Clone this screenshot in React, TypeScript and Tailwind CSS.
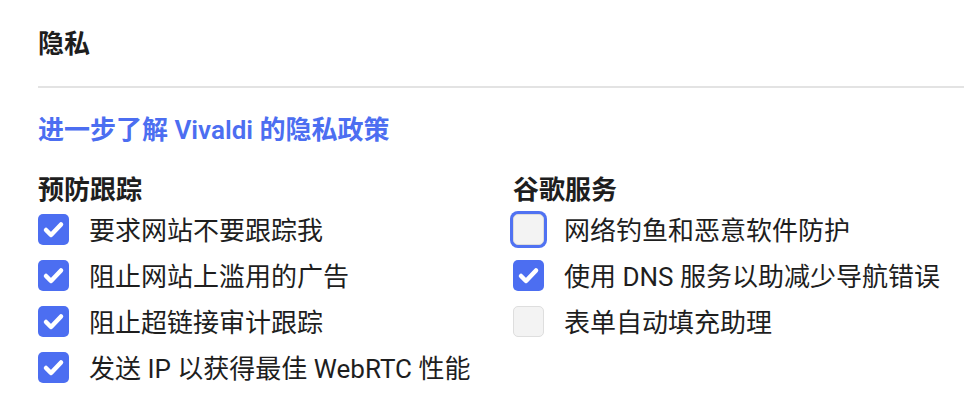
import React from 'react'

type Option = {
  label: string
  checked: boolean
  focused?: boolean
}

const tracking: Option[] = [
  { label: '要求网站不要跟踪我', checked: true },
  { label: '阻止网站上滥用的广告', checked: true },
  { label: '阻止超链接审计跟踪', checked: true },
  { label: '发送 IP 以获得最佳 WebRTC 性能', checked: true },
]

const google: Option[] = [
  { label: '网络钓鱼和恶意软件防护', checked: false, focused: true },
  { label: '使用 DNS 服务以助减少导航错误', checked: true },
  { label: '表单自动填充助理', checked: false },
]

function CheckBox({ checked, focused }: { checked: boolean; focused?: boolean }) {
  if (checked) {
    return (
      <span className="flex h-[31px] w-[31px] shrink-0 items-center justify-center rounded-[5px] bg-[#4c6ef1]">
        <svg width="31" height="31" viewBox="0 0 31 31" fill="none">
          <path
            d="M8 16l5 5 10-10.5"
            stroke="white"
            strokeWidth="4.5"
            strokeLinecap="round"
            strokeLinejoin="round"
          />
        </svg>
      </span>
    )
  }
  return (
    <span
      className={
        focused
          ? 'h-[31px] w-[31px] shrink-0 rounded-[5px] border border-[#dcdcdc] bg-[#f3f3f3] ring-[3px] ring-[#5072f2]'
          : 'h-[31px] w-[31px] shrink-0 rounded-[5px] border border-[#dedede] bg-[#f3f3f3]'
      }
    />
  )
}

function OptionGroup({ title, options }: { title: string; options: Option[] }) {
  return (
    <div>
      <h3 className="text-[26px] font-bold leading-[32px] text-[#1e1e1e]">{title}</h3>
      <ul>
        {options.map(opt => (
          <li key={opt.label} className="flex h-[46px] items-center gap-[20px]">
            <CheckBox checked={opt.checked} focused={opt.focused} />
            <span className="pt-[4px] text-[26px] leading-[32px] text-[#1e1e1e]">{opt.label}</span>
          </li>
        ))}
      </ul>
    </div>
  )
}

export default function App() {
  return (
    <div
      className="h-[416px] w-[964px] overflow-hidden bg-white pl-[38px] pt-[26px]"
      style={{ fontFamily: 'Roboto, "Noto Sans CJK SC", sans-serif' }}
    >
      <h2 className="text-[26px] font-bold leading-[36px] text-[#1e1e1e]">隐私</h2>
      <div className="mt-[24px] h-[2px] bg-[#e3e3e3]" />
      <a className="mt-[24px] block text-[26px] font-semibold leading-[36px] text-[#4c6ef1]">
        进一步了解 Vivaldi 的隐私政策
      </a>
      <div className="mt-[26px] grid grid-cols-[475px_1fr]">
        <OptionGroup title="预防跟踪" options={tracking} />
        <OptionGroup title="谷歌服务" options={google} />
      </div>
    </div>
  )
}
